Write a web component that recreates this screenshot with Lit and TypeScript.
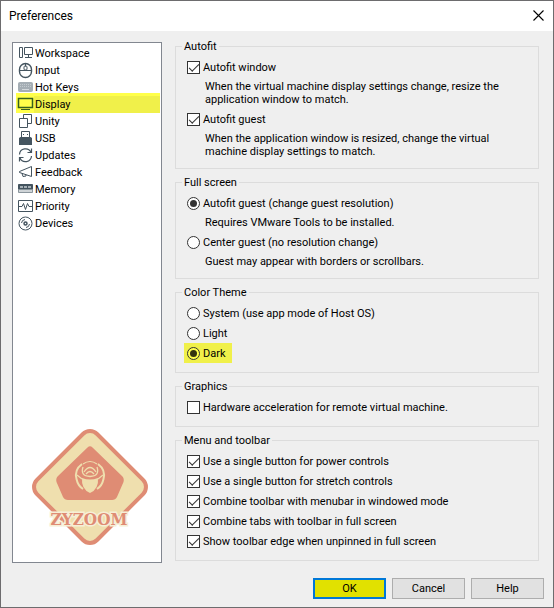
import { LitElement, html, css, svg } from "lit";
import { customElement, state } from "lit/decorators.js";

const icons = {
  workspace: svg`<path d="M2.500 2.500h3v10h-3zM7.500 2.500h8v7h-8zM11.500 10v2M8 12.500h7"/>`,
  input: svg`<rect x="2.500" y="1.500" width="12" height="14" rx="6" stroke-width="1.400"/><path d="M3 8.500h11M8.500 2v2.500"/><rect x="7" y="4" width="3" height="4" rx="1"/>`,
  keys: svg`<rect x="1.500" y="3.500" width="14" height="9" rx="1" fill="#a4adb4" stroke="#a4adb4"/><path d="M3 5.500h11M3 7.500h11" stroke="#c3cacf" stroke-dasharray="1 1"/><path d="M5 10.500h7" stroke="#d3d8db"/>`,
  display: svg`<path d="M1.500 2.500h14v9h-14z" stroke-width="1.500"/><path d="M4 13.500h9"/>`,
  unity: svg`<path d="M2.500 5.500h8v9h-8zM6.500 5V1.500h8v9h-4"/>`,
  usb: svg`<path d="M4.500 7V1.500h8V7"/><path d="M6 4.500h1M10 4.500h1"/><path d="M2 8l1.500-1h10L15 8v7H2z" fill="#44545f" stroke="none"/>`,
  updates: svg`<path d="M2.500 7.500A6 6 0 0 1 14 5.500M14.500 9A6 6 0 0 1 3 11M14.500 1.500v4h-4M2.500 14.500v-4h4" stroke-width="1.200"/>`,
  feedback: svg`<path d="M14.500 2.500v10L2.500 8.500v-1zM5 9.500l1 3 3-.5V11"/>`,
  memory: svg`<path d="M1.500 3.500h14v5h-14z" fill="#44545f"/><path d="M3 6h3M7 6h3M11 6h3" stroke="#a5afb5" stroke-width="2"/><path d="M1.500 8.500v3h14v-3" fill="#cfd4d7" stroke="#8b969d"/>`,
  priority: svg`<path d="M1.500 2.500h14v11h-14zM2 8.500h3l1.500-3 2 6 2-6 1.500 3H15"/>`,
  devices: svg`<circle cx="8.500" cy="8.500" r="6.500"/><circle cx="8.500" cy="8.500" r="1.500" stroke-width="1.500"/><path d="M4.500 8A4 4 0 0 1 8 4.500M9 12.500A4 4 0 0 0 12.500 9"/>`,
};

const sections: { name: string; icon: keyof typeof icons }[] = [
  { name: "Workspace", icon: "workspace" },
  { name: "Input", icon: "input" },
  { name: "Hot Keys", icon: "keys" },
  { name: "Display", icon: "display" },
  { name: "Unity", icon: "unity" },
  { name: "USB", icon: "usb" },
  { name: "Updates", icon: "updates" },
  { name: "Feedback", icon: "feedback" },
  { name: "Memory", icon: "memory" },
  { name: "Priority", icon: "priority" },
  { name: "Devices", icon: "devices" },
];

@customElement("app-root")
export class AppRoot extends LitElement {
  @state() private selected = "Display";

  static styles = css`
    :host {
      display: flex;
      flex-direction: column;
      box-sizing: border-box;
      min-height: 100vh;
      border: 1px solid #6d6c6e;
      background: #efefef;
      color: #000;
      font: 11px/13px Roboto, "Noto Sans", sans-serif;
    }
    .titlebar {
      display: flex;
      align-items: center;
      justify-content: space-between;
      height: 30px;
      padding: 0 9px 0 8px;
      background: #fff;
    }
    .title {
      margin: 0;
      font-size: 12px;
      font-weight: 400;
    }
    .close {
      display: flex;
      padding: 0 0 2px;
      border: 0;
      background: none;
    }
    .body {
      flex: 1;
      display: grid;
      grid-template-columns: 150px 1fr;
      column-gap: 13px;
      padding: 8px 14px 0 11px;
    }
    .sidebar {
      display: flex;
      flex-direction: column;
      box-sizing: border-box;
      margin-top: 3px;
      padding: 2px 1px 17px 3px;
      border: 1px solid #828790;
      background: #fff;
    }
    .item {
      display: grid;
      grid-template-columns: 18px 1fr;
      align-items: center;
      height: 17px;
      padding: 0 0 0 1px;
      border: 0;
      background: none;
      color: inherit;
      font: inherit;
      text-align: left;
      white-space: nowrap;
    }
    .item.on {
      background: linear-gradient(90deg, #ffff4a 18px, #f0f04a 18px);
      box-shadow: 0 -3px #ffff4a;
    }
    .glyph {
      display: block;
      width: 17px;
      height: 17px;
      fill: none;
      stroke: #44545f;
    }
    .item.on .glyph {
      stroke: #35601d;
    }
    .logo {
      display: block;
      width: 116px;
      height: 116px;
      margin: auto 0 0 16px;
    }
    .brand {
      font: 700 17px "DejaVu Serif Condensed", "DejaVu Serif", serif;
    }
    .panels {
      display: flex;
      flex-direction: column;
      gap: 6px;
      min-width: 0;
      padding-bottom: 2px;
    }
    .group {
      min-width: 0;
      margin: 0;
      padding: 3px 6px 9px;
      border: 1px solid #dcdcdc;
    }
    .group.described {
      padding-bottom: 10px;
    }
    .legend {
      padding: 0 2px;
      line-height: 15px;
    }
    .row {
      display: flex;
      align-items: center;
      height: 20px;
      padding-left: 5px;
    }
    .choice {
      display: flex;
      align-items: center;
      gap: 3px;
      white-space: nowrap;
    }
    .choice.marked {
      height: 20px;
      margin-left: -3px;
      padding: 0 6px 0 3px;
      background: #f0f04a;
    }
    .box {
      appearance: none;
      display: grid;
      place-items: center;
      box-sizing: border-box;
      flex: none;
      width: 13px;
      height: 13px;
      margin: 0;
      border: 1px solid #333;
      background: #fff;
    }
    .round {
      border-radius: 50%;
    }
    .marked .box {
      background: #ffff4a;
    }
    .tick:checked::before {
      content: "";
      box-sizing: border-box;
      width: 10px;
      height: 5px;
      border: solid #333;
      border-width: 0 0 1px 1px;
      transform: translateY(-1px) rotate(-45deg);
    }
    .round:checked::before {
      content: "";
      width: 7px;
      height: 7px;
      border-radius: 50%;
      background: #333;
    }
    .marked .round:checked::before {
      background: #33330f;
    }
    .note {
      margin: 3px 0 3px 23px;
      max-width: 300px;
    }
    .note:last-child {
      margin-bottom: 0;
    }
    .footer {
      display: flex;
      justify-content: flex-end;
      gap: 6px;
      padding: 15px 9px 8px;
    }
    .button {
      box-sizing: border-box;
      width: 73px;
      height: 21px;
      padding: 0;
      border: 1px solid #adadad;
      background: #e1e1e1;
      color: inherit;
      font: inherit;
    }
    .button.primary {
      border: 2px solid #0078d7;
      background: #e1e100;
    }
  `;

  private check(text: string, checked = true) {
    return html`<div class="row">
      <label class="choice"><input class="box tick" type="checkbox" .checked=${checked} />${text}</label>
    </div>`;
  }

  private radio(name: string, text: string, checked = false, marked = false) {
    return html`<div class="row">
      <label class="choice ${marked ? "marked" : ""}"
        ><input class="box round" type="radio" name=${name} .checked=${checked} />${text}</label
      >
    </div>`;
  }

  render() {
    return html`
      <header class="titlebar">
        <h1 class="title">Preferences</h1>
        <button class="close" aria-label="Close">
          <svg width="11" height="11" viewBox="0 0 11 11" stroke="#000" stroke-width="1.100"><path d="M.5.5l10 10M10.500.5l-10 10" /></svg>
        </button>
      </header>
      <main class="body">
        <nav class="sidebar">
          ${sections.map(
            (s) => html`<button
              class="item ${s.name === this.selected ? "on" : ""}"
              @click=${() => (this.selected = s.name)}
            >
              <svg class="glyph" viewBox="0 0 17 17">${icons[s.icon]}</svg>${s.name}
            </button>`
          )}
          <svg class="logo" viewBox="0 0 116 116" role="img" aria-label="ZYZOOM">
            <rect x="15.500" y="15.500" width="85" height="85" rx="10" transform="rotate(45 58 58)" fill="#efdfae" stroke="#df8c74" stroke-width="4" />
            <path d="M55.500 18.500Q58 16 60.500 18.500L90 47Q92.500 49.500 91.500 53L85 68Q83.500 71 80 71H36Q32.500 71 31 68L24.500 53Q23.500 49.500 26 47Z" fill="#df8c74" />
            <path d="M50 35Q42 41 44.500 50Q46 57 51 60M66 35Q74 41 71.500 50Q70 57 65 60" fill="none" stroke="#efdfae" stroke-width="2" />
            <path d="M51 35Q58 30 65 35M45 46L50 50M71 46L66 50" fill="none" stroke="#efdfae" stroke-width="1.200" />
            <path d="M50 49Q58 52 66 49Q67 60 58 64Q49 60 50 49Z" fill="#efdfae" />
            <path d="M51 38Q48 47 58 47.500Q68 47 65 38M52 43Q58 34 64 43M54 45Q58 40 62 45" fill="none" stroke="#efdfae" stroke-width="1.300" />
            <text class="brand" x="57" y="96" text-anchor="middle" fill="#df8c74" stroke="#f6efd6" stroke-width="3" paint-order="stroke">ZYZOOM</text>
          </svg>
        </nav>
        <div class="panels">
          <fieldset class="group described">
            <legend class="legend">Autofit</legend>
            ${this.check("Autofit window")}
            <p class="note">When the virtual machine display settings change, resize the application window to match.</p>
            ${this.check("Autofit guest")}
            <p class="note">When the application window is resized, change the virtual machine display settings to match.</p>
          </fieldset>
          <fieldset class="group described">
            <legend class="legend">Full screen</legend>
            ${this.radio("fullscreen", "Autofit guest (change guest resolution)", true)}
            <p class="note">Requires VMware Tools to be installed.</p>
            ${this.radio("fullscreen", "Center guest (no resolution change)")}
            <p class="note">Guest may appear with borders or scrollbars.</p>
          </fieldset>
          <fieldset class="group">
            <legend class="legend">Color Theme</legend>
            ${this.radio("theme", "System (use app mode of Host OS)")}
            ${this.radio("theme", "Light")}
            ${this.radio("theme", "Dark", true, true)}
          </fieldset>
          <fieldset class="group">
            <legend class="legend">Graphics</legend>
            ${this.check("Hardware acceleration for remote virtual machine.", false)}
          </fieldset>
          <fieldset class="group">
            <legend class="legend">Menu and toolbar</legend>
            ${this.check("Use a single button for power controls")}
            ${this.check("Use a single button for stretch controls")}
            ${this.check("Combine toolbar with menubar in windowed mode")}
            ${this.check("Combine tabs with toolbar in full screen")}
            ${this.check("Show toolbar edge when unpinned in full screen")}
          </fieldset>
        </div>
      </main>
      <footer class="footer">
        <button class="button primary">OK</button>
        <button class="button">Cancel</button>
        <button class="button">Help</button>
      </footer>
    `;
  }
}
